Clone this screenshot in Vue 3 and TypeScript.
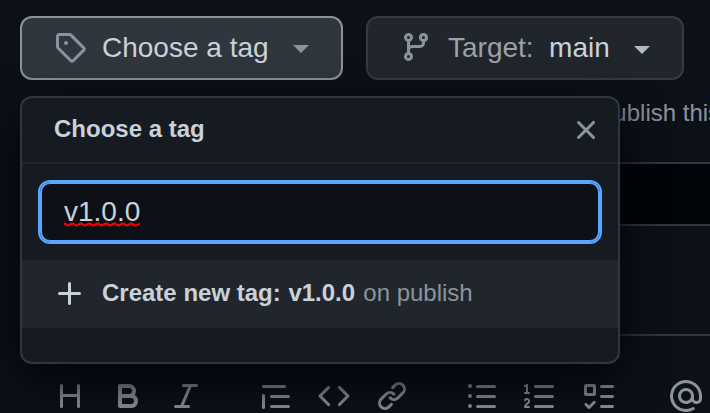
<script setup lang="ts">
import { ref } from 'vue'

interface Tool {
  name: string
  path: string
}

const tagName = ref<string>('v1.0.0')

const toolGroups: Tool[][] = [
  [
    { name: 'heading', path: 'M3.75 2a.75.75 0 01.75.75V7h7V2.75a.75.75 0 011.5 0v10.5a.75.75 0 01-1.5 0V8.5h-7v4.75a.75.75 0 01-1.5 0V2.75A.75.75 0 013.75 2z' },
    { name: 'bold', path: 'M4 2a1 1 0 00-1 1v10a1 1 0 001 1h5.5a3.5 3.5 0 001.852-6.47A3.5 3.5 0 008.5 2H4zm4.5 5a1.5 1.5 0 100-3H5v3h3.5zM5 9v3h4.5a1.5 1.5 0 000-3H5z' },
    { name: 'italic', path: 'M6 2.75A.75.75 0 016.75 2h6.5a.75.75 0 010 1.5h-2.505l-3.858 9H9.25a.75.75 0 010 1.5h-6.5a.75.75 0 010-1.5h2.505l3.858-9H6.75A.75.75 0 016 2.75z' },
  ],
  [
    { name: 'quote', path: 'M1.75 2.5a.75.75 0 000 1.5h10.5a.75.75 0 000-1.5H1.75zm4 5a.75.75 0 000 1.5h8.5a.75.75 0 000-1.5h-8.5zm0 5a.75.75 0 000 1.5h8.5a.75.75 0 000-1.5h-8.5zM2.5 7.75a.75.75 0 00-1.5 0v6a.75.75 0 001.5 0v-6z' },
    { name: 'code', path: 'M4.72 3.22a.75.75 0 011.06 1.06L2.06 8l3.72 3.72a.75.75 0 11-1.06 1.06L.47 8.53a.75.75 0 010-1.06l4.25-4.25zm6.56 0a.75.75 0 10-1.06 1.06L13.94 8l-3.72 3.72a.75.75 0 101.06 1.06l4.25-4.25a.75.75 0 000-1.06l-4.25-4.25z' },
    { name: 'link', path: 'M7.775 3.275a.75.75 0 001.06 1.06l1.25-1.25a2 2 0 112.83 2.83l-2.5 2.5a2 2 0 01-2.83 0 .75.75 0 00-1.06 1.06 3.5 3.5 0 004.95 0l2.5-2.5a3.5 3.5 0 00-4.95-4.95l-1.25 1.25zm-4.69 9.64a2 2 0 010-2.83l2.5-2.5a2 2 0 012.83 0 .75.75 0 001.06-1.06 3.5 3.5 0 00-4.95 0l-2.5 2.5a3.5 3.5 0 004.95 4.95l1.25-1.25a.75.75 0 00-1.06-1.06l-1.25 1.25a2 2 0 01-2.83 0z' },
  ],
  [
    { name: 'unordered list', path: 'M2 4a1 1 0 100-2 1 1 0 000 2zm3.75-1.5a.75.75 0 000 1.5h8.5a.75.75 0 000-1.5h-8.5zm0 5a.75.75 0 000 1.5h8.5a.75.75 0 000-1.5h-8.5zm0 5a.75.75 0 000 1.5h8.5a.75.75 0 000-1.5h-8.5zM3 8a1 1 0 11-2 0 1 1 0 012 0zm-1 6a1 1 0 100-2 1 1 0 000 2z' },
    { name: 'ordered list', path: 'M2.003 2.5a.5.5 0 00-.723-.447l-1.003.5a.5.5 0 00.446.895l.28-.14V6H.5a.5.5 0 000 1h2.006a.5.5 0 100-1h-.503V2.5zM5 3.25a.75.75 0 01.75-.75h8.5a.75.75 0 010 1.5h-8.5A.75.75 0 015 3.25zm0 5a.75.75 0 01.75-.75h8.5a.75.75 0 010 1.5h-8.5A.75.75 0 015 8.25zm0 5a.75.75 0 01.75-.75h8.5a.75.75 0 010 1.5h-8.5a.75.75 0 01-.75-.75zM.924 10.32l.003-.004a.851.851 0 01.144-.153A.66.66 0 011.5 10c.195 0 .306.068.374.146a.57.57 0 01.128.376c0 .453-.269.682-.8 1.078l-.035.025C.692 11.98 0 12.495 0 13.5a.5.5 0 00.5.5h2.003a.5.5 0 000-1H1.146c.132-.197.351-.372.654-.597l.047-.035c.47-.35 1.156-.858 1.156-1.845 0-.365-.118-.744-.377-1.038-.268-.303-.658-.484-1.126-.484-.48 0-.84.202-1.068.392a1.858 1.858 0 00-.348.384.5.5 0 00.842.543z' },
    { name: 'task list', path: 'M2 2h4a1 1 0 011 1v4a1 1 0 01-1 1H2a1 1 0 01-1-1V3a1 1 0 011-1zm4.655 8.595a.75.75 0 010 1.06L4.03 14.28a.75.75 0 01-1.06 0l-1.5-1.5a.75.75 0 111.06-1.06l.97.97 2.095-2.095a.75.75 0 011.06 0zM9.75 2.5h5.5a.75.75 0 010 1.5h-5.5a.75.75 0 010-1.5zm0 5h5.5a.75.75 0 010 1.5h-5.5a.75.75 0 010-1.5zm0 5h5.5a.75.75 0 010 1.5h-5.5a.75.75 0 010-1.5zM2.5 3.5v3h3v-3z' },
  ],
  [
    { name: 'mention', path: 'M4.75 2.37a6.5 6.5 0 006.5 11.26.75.75 0 01.75 1.298 8 8 0 113.994-7.273.754.754 0 01.006.095v1.5a2.75 2.75 0 01-5.072 1.475A4 4 0 1112 8v1.25a1.25 1.25 0 002.5 0V7.867a6.5 6.5 0 00-9.75-5.496zM10.5 8a2.5 2.5 0 10-5 0 2.5 2.5 0 005 0z' },
  ],
]
</script>

<template>
  <main class="page">
    <div class="actions">
      <button class="btn btn-active">
        <svg class="icon" viewBox="0 0 16 16"><path fill-rule="evenodd" d="M2.5 7.775V2.75a.25.25 0 01.25-.25h5.025a.25.25 0 01.177.073l6.25 6.25a.25.25 0 010 .354l-5.025 5.025a.25.25 0 01-.354 0l-6.25-6.25a.25.25 0 01-.073-.177zm-1.5 0V2.75C1 1.784 1.784 1 2.75 1h5.025c.464 0 .91.184 1.238.513l6.25 6.25a1.75 1.75 0 010 2.474l-5.026 5.026a1.75 1.75 0 01-2.474 0l-6.25-6.25A1.75 1.75 0 011 7.775zM6 5a1 1 0 100 2 1 1 0 000-2z" /></svg>
        <span class="btn-text">Choose a tag</span>
        <span class="caret"></span>
      </button>
      <button class="btn btn-target">
        <svg class="icon" viewBox="0 0 16 16"><path fill-rule="evenodd" d="M11.75 2.5a.75.75 0 100 1.5.75.75 0 000-1.5zm-2.25.75a2.25 2.25 0 113 2.122V6A2.5 2.5 0 0110 8.5H6a1 1 0 00-1 1v1.128a2.251 2.251 0 11-1.5 0V5.372a2.25 2.25 0 111.5 0v1.836A2.492 2.492 0 016 7h4a1 1 0 001-1v-.628A2.25 2.25 0 019.5 3.25zM4.25 12a.75.75 0 100 1.5.75.75 0 000-1.5zM3.5 3.25a.75.75 0 111.5 0 .75.75 0 01-1.5 0z" /></svg>
        <span class="btn-label">Target:</span>
        <span class="btn-text">main</span>
        <span class="caret"></span>
      </button>
    </div>
    <p class="hint">publish this</p>
    <div class="title-field"></div>
    <div class="tabs"></div>
    <div class="toolbar">
      <div v-for="(group, i) in toolGroups" :key="i" class="tool-group">
        <svg v-for="tool in group" :key="tool.name" class="icon" viewBox="0 0 16 16" :aria-label="tool.name">
          <path fill-rule="evenodd" :d="tool.path" />
        </svg>
      </div>
    </div>

    <section class="menu">
      <header class="menu-header">
        <span>Choose a tag</span>
        <svg class="icon" viewBox="0 0 16 16"><path d="M3.72 3.72a.75.75 0 011.06 0L8 6.94l3.22-3.22a.75.75 0 111.06 1.06L9.06 8l3.22 3.22a.75.75 0 11-1.06 1.06L8 9.06l-3.22 3.22a.75.75 0 01-1.06-1.06L6.94 8 3.72 4.78a.75.75 0 010-1.06z" /></svg>
      </header>
      <div class="search">
        <div class="search-box">
          <span class="search-value">{{ tagName }}
            <svg class="squiggle" viewBox="0 0 76 5"><path d="M0 1.5 C2 1.5 2.4 3.5 4.2 3.5 S6.4 1.5 8.4 1.5 S10.8 3.5 12.6 3.5 S14.8 1.5 16.8 1.5 S19.2 3.5 21 3.5 S23.2 1.5 25.2 1.5 S27.6 3.5 29.4 3.5 S31.6 1.5 33.6 1.5 S36 3.5 37.8 3.5 S40 1.5 42 1.5 S44.4 3.5 46.2 3.5 S48.4 1.5 50.4 1.5 S52.8 3.5 54.6 3.5 S56.8 1.5 58.8 1.5 S61.2 3.5 63 3.5 S65.2 1.5 67.2 1.5 S69.6 3.5 71.4 3.5 S73.8 1.5 76 2.5" /></svg>
          </span>
        </div>
      </div>
      <div class="create">
        <svg class="icon" viewBox="0 0 16 16"><path d="M7.75 2a.75.75 0 01.75.75V7h4.25a.75.75 0 110 1.5H8.5v4.25a.75.75 0 11-1.5 0V8.5H2.75a.75.75 0 010-1.5H7V2.75A.75.75 0 017.75 2z" /></svg>
        <span class="create-text"><b>Create new tag: <span class="create-name">{{ tagName }}</span></b> on publish</span>
      </div>
    </section>
  </main>
</template>

<style>
body {
  background: #0d1117;
  overflow: hidden;
}
</style>

<style scoped>
.page {
  position: relative;
  box-sizing: border-box;
  width: 710px;
  height: 413px;
  padding-top: 16px;
  overflow: hidden;
  background: #0d1117;
  color: #c9d1d9;
  font-family: 'Liberation Sans', Arial, sans-serif;
}
.icon {
  width: 32px;
  height: 32px;
  flex: none;
  display: block;
  fill: #8b949e;
}
.actions {
  display: flex;
  gap: 23px;
  padding-left: 20px;
}
.btn {
  box-sizing: border-box;
  display: flex;
  align-items: center;
  width: 323px;
  height: 64px;
  padding: 0 32px;
  border: 2px solid #363b42;
  border-radius: 12px;
  background: #21262d;
  color: #c9d1d9;
  font: 28px/40px 'Liberation Sans', Arial, sans-serif;
  white-space: nowrap;
}
.btn .icon {
  margin-top: -2px;
}
.btn-active {
  border-color: #8b949e;
  background: #30363d;
}
.btn-active .btn-text {
  margin-left: 16px;
}
.btn-target {
  width: 318px;
}
.btn-label {
  margin-left: 16px;
  color: #9aa1aa;
}
.btn-target .btn-text {
  margin-left: 15.5px;
}
.caret {
  flex: none;
  margin: 2px 0 0 24.5px;
  border: 8px solid transparent;
  border-top-color: #8b949e;
  border-bottom: 0;
}
.btn-target .caret {
  margin-top: 4px;
  border-top-color: #b1bac4;
}
.hint {
  margin: 15px 0 0 600px;
  height: 67px;
  color: #8b949e;
  font-size: 24px;
  line-height: 36px;
  white-space: nowrap;
}
.title-field {
  height: 60px;
  margin-left: 20px;
  border-top: 2px solid #30363d;
  border-bottom: 2px solid #30363d;
  background: #010409;
}
.tabs {
  height: 108px;
  margin-left: 20px;
  border-bottom: 2px solid #30363d;
}
.toolbar {
  display: flex;
  gap: 58px;
  padding: 44px 0 0 54px;
}
.tool-group {
  display: flex;
  gap: 26px;
}
.tool-group:last-child {
  margin-left: -2px;
}
.menu {
  position: absolute;
  left: 20px;
  top: 96px;
  box-sizing: border-box;
  width: 600px;
  height: 268px;
  border: 2px solid #30363d;
  border-radius: 12px;
  background: #161b22;
  box-shadow: 0 16px 48px #010409;
}
.menu-header {
  display: flex;
  align-items: center;
  justify-content: space-between;
  height: 64px;
  padding: 0 16px 0 32px;
  border-bottom: 2px solid #21262d;
  font-size: 24px;
  font-weight: bold;
}
.menu-header span {
  margin-top: -2px;
}
.search {
  padding: 16px;
}
.search-box {
  box-sizing: border-box;
  display: flex;
  align-items: center;
  height: 64px;
  padding: 0 24px;
  border: 2px solid #58a6ff;
  border-radius: 12px;
  background: #0d1117;
  box-shadow: inset 0 0 0 2px #58a6ff;
  font-size: 28px;
}
.search-value {
  position: relative;
  line-height: 40px;
}
.squiggle {
  position: absolute;
  left: 0;
  top: 30px;
  width: 76px;
  height: 5px;
  fill: none;
  stroke: #ff0000;
  stroke-width: 2;
}
.create {
  display: flex;
  align-items: center;
  gap: 16px;
  height: 68px;
  padding-left: 32px;
  background: #21262d;
}
.create-text {
  margin-top: -2px;
  color: #8b949e;
  font-size: 24px;
}
.create b {
  color: #c9d1d9;
}
.create-name {
  margin: 0 1.5px 0 1px;
}
.create .icon {
  fill: #c9d1d9;
}
</style>
